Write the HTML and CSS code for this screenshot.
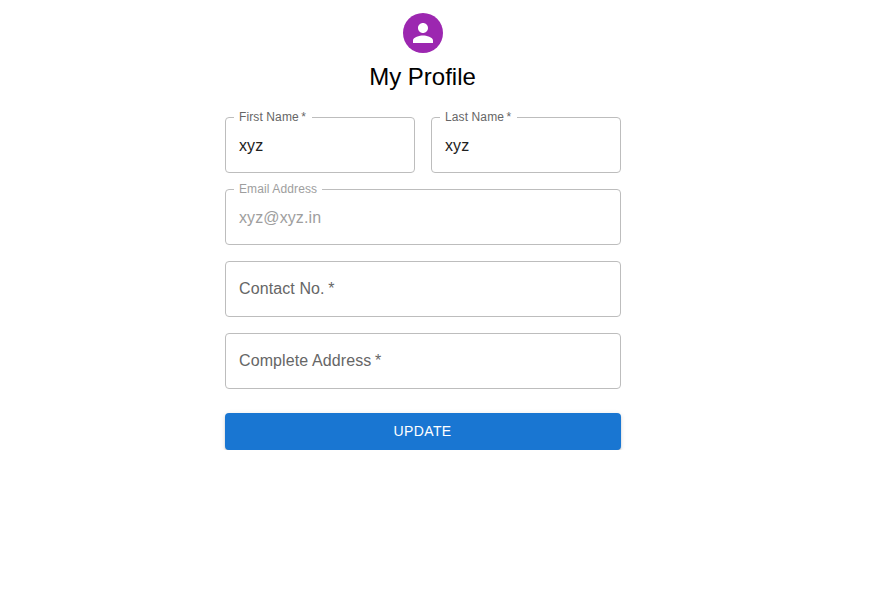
FILE: index.html
```html
<!DOCTYPE html>
<html lang="en">
<head>
<meta charset="utf-8">
<title>My Profile</title>
<link rel="stylesheet" href="styles.css">
</head>
<body>
<main class="profile">
  <div class="avatar">
    <svg viewBox="0 0 24 24" aria-hidden="true"><path d="M12 12c2.21 0 4-1.79 4-4s-1.79-4-4-4-4 1.790-4 4 1.790 4 4 4zm0 2c-2.670 0-8 1.340-8 4v2h16v-2c0-2.660-5.330-4-8-4z"/></svg>
  </div>
  <h1 class="title">My Profile</h1>
  <form class="form">
    <div class="row">
      <fieldset class="field"><legend class="label">First Name <span class="required">*</span></legend><div class="value">xyz</div></fieldset>
      <fieldset class="field"><legend class="label">Last Name <span class="required">*</span></legend><div class="value">xyz</div></fieldset>
    </div>
    <fieldset class="field disabled"><legend class="label">Email Address</legend><div class="value">xyz@xyz.in</div></fieldset>
    <div class="field empty"><div class="value">Contact No. <span class="required">*</span></div></div>
    <div class="field empty"><div class="value">Complete Address <span class="required">*</span></div></div>
    <button class="submit" type="button">UPDATE</button>
  </form>
</main>
</body>
</html>
```
FILE: styles.css
```css
* { box-sizing: border-box; }
body { margin: 0; background: #fff; font-family: "Liberation Sans", Arial, sans-serif; }
.profile {
  width: 396px;
  margin-left: 225px;
  padding-top: 13px;
  display: flex;
  flex-direction: column;
  align-items: center;
}
.avatar {
  width: 40px;
  height: 40px;
  border-radius: 50%;
  background: #9c27b0;
  display: flex;
  align-items: center;
  justify-content: center;
}
.avatar svg { width: 30px; height: 30px; fill: #fff; }
.title { margin: 8px 1px 0 0; font-size: 24px; font-weight: 400; line-height: 32px; color: #000; }
.form { width: 100%; margin-top: 24px; display: flex; flex-direction: column; gap: 16px; }
.row { display: grid; grid-template-columns: 1fr 1fr; gap: 16px; }
.field {
  min-width: 0;
  height: 56px;
  margin: 0;
  padding: 0 13px;
  border: 1px solid #bdbdbd;
  border-radius: 4px;
}
fieldset.field { height: 62px; margin-top: -6px; padding: 0 8px; }
.label {
  height: 12px;
  padding: 0 5px;
  font-size: 12px;
  line-height: 12px;
  letter-spacing: 0.11px;
  color: #666;
}
.required { margin-left: -1px; }
.label .required { margin: 0 1px 0 -1px; }
.value { font-size: 16px; line-height: 23px; letter-spacing: 0.1px; color: #212121; }
fieldset .value { padding: 11px 5px 0; }
.disabled .label, .disabled .value { color: #9e9e9e; }
.empty .value { padding-top: 15px; color: #666; }
.submit {
  height: 37px;
  margin-top: 8px;
  padding: 0 1px 2px 0;
  border: 0;
  border-radius: 4px;
  background: #1976d2;
  color: #fff;
  font: 500 14px/24px "Liberation Sans", Arial, sans-serif;
  letter-spacing: 0.4px;
  box-shadow: 0 3px 1px -2px rgba(0,0,0,.2), 0 2px 2px rgba(0,0,0,.14), 0 1px 5px rgba(0,0,0,.12);
}
```
